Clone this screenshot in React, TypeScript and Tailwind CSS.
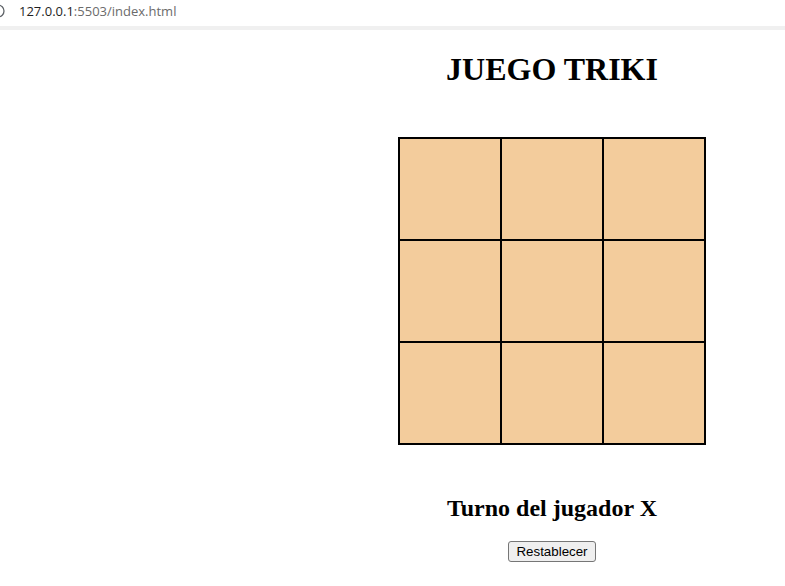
import { useState } from 'react'

type Cell = 'X' | 'O' | null

export default function App() {
  const [board, setBoard] = useState<Cell[]>(Array(9).fill(null))
  const [turn, setTurn] = useState<'X' | 'O'>('X')

  const play = (i: number) => {
    if (board[i]) return
    const next = [...board]
    next[i] = turn
    setBoard(next)
    setTurn(turn === 'X' ? 'O' : 'X')
  }

  const reset = () => {
    setBoard(Array(9).fill(null))
    setTurn('X')
  }

  return (
    <div className="min-h-[586px] bg-white">
      {/* barra del navegador */}
      <div className="h-[26px] flex items-center relative overflow-hidden">
        <svg width="8" height="14" viewBox="0 0 8 14" className="absolute left-0 top-[4px]">
          <circle cx="-2" cy="7" r="6" fill="none" stroke="#5f6368" strokeWidth="1.3" />
        </svg>
        <span className="pl-[19px] text-[13px] leading-none font-['Open_Sans',sans-serif] -mt-[3px]">
          <span className="text-[#1f1f1f]">127.0.0.1</span>
          <span className="text-[#6b6b6b]">:5503/index.html</span>
        </span>
      </div>
      <div className="h-[4px] bg-[#f0f0f0]" />

      <div className="ml-[319px] w-[466px] flex flex-col items-center font-['Liberation_Serif',serif] text-black">
        <h1 className="mt-[21px] text-[32px] font-bold leading-[37px]">JUEGO TRIKI</h1>

        <div className="mt-[49px] grid grid-cols-[100px_100px_100px] gap-[2px] bg-black border-2 border-black">
          {board.map((c, i) => (
            <button
              key={i}
              onClick={() => play(i)}
              className="w-[100px] h-[100px] bg-[#f3cc9c] text-[48px] font-bold"
            >
              {c}
            </button>
          ))}
        </div>

        <h2 className="mt-[49px] text-[24px] font-bold leading-[28px]">Turno del jugador {turn}</h2>

        <button
          onClick={reset}
          className="mt-[19px] h-[21px] px-[7px] text-[13.33px] leading-none font-['Liberation_Sans',sans-serif] bg-[#efefef] border border-[#767676] rounded-[3px] text-black"
        >
          Restablecer
        </button>
      </div>
    </div>
  )
}
